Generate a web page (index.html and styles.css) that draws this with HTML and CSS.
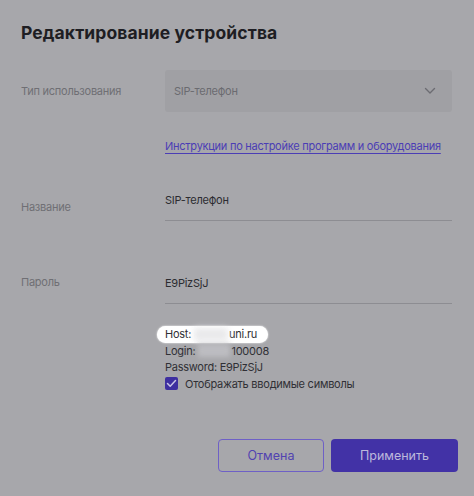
FILE: index.html
```html
<!DOCTYPE html>
<html lang="ru">
<head>
<meta charset="utf-8">
<link rel="stylesheet" href="styles.css">
</head>
<body>
<div class="dialog">
  <h1 class="title">Редактирование устройства</h1>
  <div class="form">
    <div class="label label-type">Тип использования</div>
    <div class="select">
      <span>SIP-телефон</span>
      <svg class="chev" width="12" height="8" viewBox="0 0 12 8"><path d="M1.5 1.5 L6 6 L10.5 1.5" fill="none" stroke="#6c6c72" stroke-width="1.4" stroke-linecap="round" stroke-linejoin="round"/></svg>
    </div>
    <div></div>
    <a class="link" href="#">Инструкции по настройке программ и оборудования</a>
    <div class="label label-name">Название</div>
    <div class="input input-name">SIP-телефон</div>
    <div class="label label-pass">Пароль</div>
    <div class="input input-pass">E9PizSjJ</div>
    <div></div>
    <div class="info">
      <div class="line host"><span class="pill">Host:<span class="blur"></span>uni.ru</span></div>
      <div class="line">Login:<span class="blur gray"></span>100008</div>
      <div class="line">Password: E9PizSjJ</div>
      <label class="check">
        <span class="box"><svg width="11" height="9" viewBox="0 0 11 9"><path d="M1.5 4.5 L4.2 7.2 L9.5 1.5" fill="none" stroke="#c9c5e6" stroke-width="1.5" stroke-linecap="round" stroke-linejoin="round"/></svg></span>
        Отображать вводимые символы
      </label>
    </div>
  </div>
  <div class="actions">
    <button class="btn btn-outline">Отмена</button>
    <button class="btn btn-primary">Применить</button>
  </div>
</div>
</body>
</html>
```
FILE: styles.css
```css
html, body {
  margin: 0;
  padding: 0;
  background: #a7a7ab;
  width: 474px;
  height: 496px;
  overflow: hidden;
}
body {
  font-family: Inter, "Noto Sans", sans-serif;
  color: #2c2c31;
}
.dialog {
  padding: 22px 16px 0 21px;
}
.title {
  margin: 0;
  font-size: 17.5px;
  font-weight: 700;
  color: #1e1e23;
  line-height: 22px;
  letter-spacing: 0.1px;
}
.form {
  display: grid;
  grid-template-columns: 144px 287px;
  margin-top: 26px;
  font-size: 11px;
  letter-spacing: -0.25px;
}
.label {
  color: #6f6f74;
}
.label-type {
  align-self: center;
}
.select {
  height: 42px;
  background: #a0a0a4;
  border-radius: 3px;
  display: flex;
  align-items: center;
  justify-content: space-between;
  padding: 0 16px 0 9px;
  color: #6b6b70;
}
.link {
  margin-top: 26px;
  color: #4b3db5;
  text-decoration: underline;
  text-underline-offset: 3px;
  line-height: 16px;
  white-space: nowrap;
}
.label-name {
  margin-top: 46px;
}
.input {
  border-bottom: 1px solid #8d8d92;
  color: #2c2c31;
  line-height: 16px;
}
.input-name {
  margin-top: 38px;
  padding-bottom: 12px;
}
.label-pass {
  margin-top: 54px;
}
.input-pass {
  margin-top: 54px;
  padding-bottom: 12px;
}
.info {
  margin-top: 22px;
  color: #303035;
}
.line {
  line-height: 16.5px;
  height: 16.5px;
  display: flex;
  align-items: center;
}
.pill {
  display: inline-flex;
  align-items: center;
  background: #fff;
  border-radius: 9px;
  padding: 0 11px 0 8px;
  margin-left: -8px;
  height: 17px;
  box-shadow: 0 0 2px #fff;
}
.blur {
  display: inline-block;
  filter: blur(3px);
  background: #e9e9eb;
  width: 34px;
  height: 13px;
  margin: 0 1px 0 3px;
}
.blur.gray {
  background: #bdbdc1;
  width: 32px;
  filter: blur(2.5px);
}
.check {
  display: flex;
  align-items: center;
  gap: 7px;
  line-height: 16px;
}
.box {
  width: 13px;
  height: 13px;
  background: #3e2fa0;
  border-radius: 2px;
  display: flex;
  align-items: center;
  justify-content: center;
}
.actions {
  display: flex;
  justify-content: flex-end;
  gap: 7px;
  margin-top: 47px;
}
.btn {
  height: 33px;
  border-radius: 4px;
  font-family: inherit;
  font-size: 12.5px;
  cursor: pointer;
}
.btn-outline {
  width: 106px;
  background: transparent;
  border: 1px solid #6e60c6;
  color: #5142b1;
}
.btn-primary {
  width: 127px;
  background: #4232a6;
  border: none;
  color: #bdb9dc;
}
```
